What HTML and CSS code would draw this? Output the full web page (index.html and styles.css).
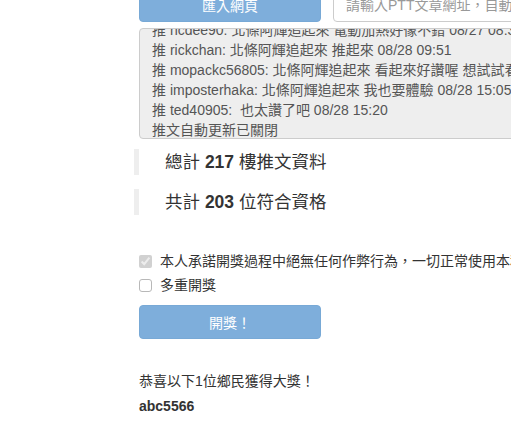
FILE: index.html
```html
<!DOCTYPE html>
<html lang="zh-Hant">
<head>
    <meta charset="UTF-8">
    <title>PTT 抽獎</title>
    <meta name="viewport" content="width=device-width, initial-scale=1" />

    <link rel="stylesheet" href="styles.css">
</head>
<body>
    <div class="page">
        <div class="importRow">
            <button class="btnPrimary" disabled>匯入網頁</button>
            <input type="text" class="urlInput" placeholder="請輸入PTT文章網址，自動匯入推文">
        </div>
        <div class="commentBox">
            <div class="commentLines">
                <div>推 ncdee90: 北條阿輝追起來 電動加熱好像不錯 08/27 08:32</div>
                <div>推 rickchan: 北條阿輝追起來 推起來 08/28 09:51</div>
                <div>推 mopackc56805: 北條阿輝追起來 看起來好讚喔 想試試看 08/28 10:12</div>
                <div>推 imposterhaka: 北條阿輝追起來 我也要體驗 08/28 15:05</div>
                <div>推 ted40905:&nbsp; 也太讚了吧 08/28 15:20</div>
                <div>推文自動更新已關閉</div>
            </div>
        </div>
        <div class="statLine">總計 <b>217</b> 樓推文資料</div>
        <div class="statLine second">共計 <b>203</b> 位符合資格</div>

        <label class="checkRow first">
            <input type="checkbox" checked disabled>
            本人承諾開獎過程中絕無任何作弊行為，一切正常使用本程式
        </label>
        <label class="checkRow">
            <input type="checkbox" class="plainCheck">
            多重開獎
        </label>
        <button class="btnPrimary drawBtn" disabled>開獎！</button>

        <div class="resultText">恭喜以下1位鄉民獲得大獎！</div>
        <div class="winner">abc5566</div>
    </div>
</body>
</html>
```

FILE: styles.css
```css
body {
    margin: 0;
    background: #fff;
    color: #333;
    font-family: "Liberation Sans", "Noto Sans CJK TC", sans-serif;
    font-size: 14px;
    line-height: 20px;
    overflow: hidden;
}

.page {
    width: 760px;
    margin-top: -12px;
    padding-left: 139px;
}

.importRow {
    display: flex;
    gap: 12px;
}

.btnPrimary {
    width: 182px;
    height: 34px;
    border: 1px solid #78a9d6;
    border-radius: 4px;
    background: #7eaedb;
    color: #fff;
    font-family: inherit;
    font-size: 14px;
    padding: 0;
}

.urlInput {
    width: 420px;
    height: 34px;
    box-sizing: border-box;
    border: 1px solid #ccc;
    border-radius: 4px;
    padding: 6px 12px;
    font-family: inherit;
    font-size: 14px;
    color: #555;
}

.urlInput::placeholder {
    color: #999;
}

.commentBox {
    margin-top: 6px;
    width: 600px;
    height: 111px;
    box-sizing: border-box;
    border: 1px solid #ccc;
    border-radius: 4px;
    background: #eee;
    color: #555;
    padding: 0 12px;
    overflow: hidden;
    display: flex;
    flex-direction: column;
    justify-content: flex-end;
    white-space: nowrap;
}

.commentLines {
    margin-bottom: -2px;
}

.statLine {
    margin: 10px 0 0 -5px;
    border-left: 5px solid #eee;
    padding-left: 26px;
    height: 26px;
    font-size: 17.5px;
    line-height: 26px;
}

.statLine.second {
    margin-top: 14px;
}

.checkRow {
    display: flex;
    align-items: center;
    gap: 8px;
    margin-top: 4px;
    white-space: nowrap;
}

.checkRow.first {
    margin-top: 36px;
}

.checkRow input {
    margin: 0;
    width: 13px;
    height: 13px;
}

.plainCheck {
    appearance: none;
    box-sizing: border-box;
    border: 1px solid #b8b8b8;
    border-radius: 3px;
    background: #fff;
}

.drawBtn {
    display: block;
    margin-top: 10px;
}

.resultText {
    margin-top: 32px;
}

.winner {
    margin-top: 5px;
    font-weight: bold;
}
```
